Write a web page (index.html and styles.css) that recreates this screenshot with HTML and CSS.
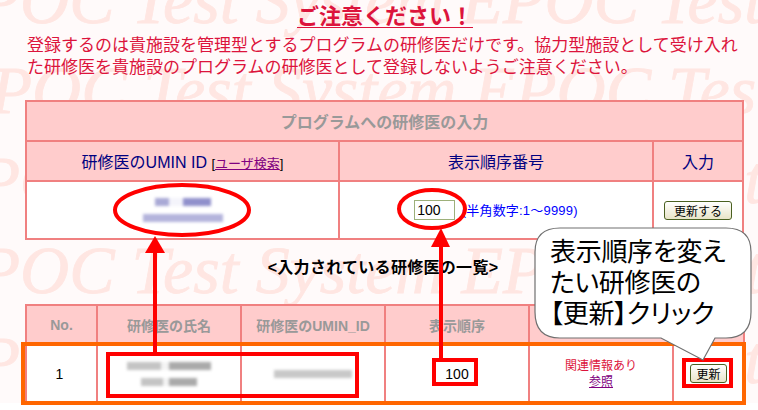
FILE: index.html
```html
<!DOCTYPE html>
<html lang="ja">
  <head>
    <meta charset="UTF-8" />
    <title>研修医の表示順序の変更</title>
    <link rel="stylesheet" href="styles.css">
  </head>

  <body>
    <div class="page">
      <div class="watermark">
        <div class="wm-row wm-a">EPOC Test System EPOC Test</div>
        <div class="wm-row wm-b">EPOC Test System EPOC Test</div>
        <div class="wm-row wm-a">EPOC Test System EPOC Test</div>
        <div class="wm-row wm-a">EPOC Test System EPOC Test</div>
        <div class="wm-row wm-a">EPOC Test System EPOC Test</div>
      </div>

      <h1 class="notice-title"><span>ご注意ください！</span></h1>
      <p class="notice">登録するのは貴施設を管理型とするプログラムの研修医だけです。協力型施設として受け入れた研修医を貴施設のプログラムの研修医として登録しないようご注意ください。</p>

      <table class="grid input-table">
        <colgroup>
          <col class="c-id" />
          <col class="c-order" />
          <col class="c-action" />
        </colgroup>
        <tr class="title-row">
          <th colspan="3">プログラムへの研修医の入力</th>
        </tr>
        <tr class="head-row">
          <td>研修医のUMIN ID <span class="small">[<a href="#">ユーザ検索</a>]</span></td>
          <td>表示順序番号</td>
          <td>入力</td>
        </tr>
        <tr class="input-row">
          <td>
            <div class="blur blur-blue">
              <i class="b-line1"></i>
              <i class="b-line2"></i>
            </div>
          </td>
          <td>
            <input class="order-input" type="text" value="100" />
            <span class="hint">(半角数字:1～9999)</span>
          </td>
          <td><button class="btn btn-wide">更新する</button></td>
        </tr>
      </table>

      <h2 class="list-title">&lt;入力されている研修医の一覧&gt;</h2>

      <table class="grid list-table">
        <colgroup>
          <col class="c-no" />
          <col class="c-name" />
          <col class="c-umin" />
          <col class="c-seq" />
          <col class="c-rel" />
          <col class="c-upd" />
        </colgroup>
        <tr class="list-head">
          <th>No.</th>
          <th>研修医の氏名</th>
          <th>研修医のUMIN_ID</th>
          <th>表示順序</th>
          <th>関連情報</th>
          <th>更新</th>
        </tr>
        <tr class="list-row">
          <td class="no-cell">1</td>
          <td>
            <div class="blur blur-gray">
              <i class="n-line1"></i>
              <i class="n-line2"></i>
            </div>
          </td>
          <td>
            <div class="blur blur-gray"><i class="u-line"></i></div>
          </td>
          <td>100</td>
          <td class="related">関連情報あり<br /><a href="#">参照</a></td>
          <td><button class="btn">更新</button></td>
        </tr>
      </table>
    </div>

    <!-- annotations drawn on top of the screenshot -->
    <svg class="marks" width="758" height="410" viewBox="0 0 758 410">
      <rect x="23" y="344" width="721" height="59" fill="none" stroke="#ff6600" stroke-width="4" />
      <g fill="none" stroke="#ff0000" stroke-width="4">
        <ellipse cx="182" cy="210" rx="67" ry="25" />
        <ellipse cx="432" cy="209" rx="33" ry="19" />
        <rect x="108" y="354" width="249" height="42" />
        <rect x="434" y="360" width="42" height="24" />
        <rect x="684" y="360" width="47" height="26" />
      </g>
      <g fill="#ff0000">
        <rect x="153" y="250" width="4" height="103" />
        <path d="M155 236 L165 253 L145 253 Z" />
        <rect x="439" y="245" width="4" height="114" />
        <path d="M441 228 L450 247 L431 247 Z" />
      </g>
      <path d="M560 228 H726 C744 228 751 238 751 252 V312 C751 328 744 338 726 338 H715 L703 360 L661 338 H560 C542 338 535 328 535 312 V252 C535 238 542 228 560 228 Z" fill="#ffffff" stroke="#707070" stroke-width="1.2" />
    </svg>
    <div class="callout">表示順序を変え<br />たい研修医の<br />【更新】クリック</div>
  </body>
</html>
```

FILE: styles.css
```css
* {
  padding: 0px;
  margin: 0px;
  box-sizing: border-box;
}

html,
body {
  width: 100%;
  height: 100%;
  background: #fff;
  overflow: hidden;
  font-family: "Liberation Sans", "Noto Sans CJK JP", sans-serif;
}

.page {
  position: relative;
  height: 403px;
  background: #fffafa;
  overflow: hidden;
  padding-top: 4px;
}

.watermark {
  position: absolute;
  top: -45px;
  left: 0;
  width: 900px;
  font-family: "Liberation Serif", serif;
  font-style: italic;
  font-size: 68px;
  line-height: 90px;
  color: #ffe6e2;
  -webkit-text-stroke: 0.8px #ffe6e2;
  white-space: nowrap;
}

.wm-a {
  margin-left: -63px;
}

.wm-b {
  margin-left: -51px;
}

.notice-title,
.notice,
.grid,
.list-title {
  position: relative;
}

.notice-title {
  text-align: center;
  font-size: 22px;
  line-height: 26px;
  color: #dc143c;
  padding-left: 12px;
}

.notice-title span {
  text-decoration: underline;
  text-decoration-thickness: 1px;
  text-underline-offset: 3px;
}

.notice {
  margin: 5px 0 0 27px;
  width: 722px;
  font-size: 17px;
  line-height: 22px;
  color: #dc143c;
}

.grid {
  table-layout: fixed;
  border-collapse: collapse;
  background: #fff;
  margin-left: 25px;
  text-align: center;
}

.grid th,
.grid td {
  border: 2px solid #f08080;
}

.input-table {
  width: 719px;
  margin-top: 21px;
}

.c-id {
  width: 313px;
}

.c-order {
  width: 314px;
}

.title-row th {
  height: 40px;
  background: #ffcccc;
  color: #999;
  font-size: 16px;
}

.head-row td {
  height: 40px;
  background: #ffcccc;
  color: #000080;
  font-size: 16px;
}

.small {
  font-size: 13px;
  color: #000;
}

a {
  color: #800080;
}

.input-row td {
  height: 58px;
}

.order-input {
  width: 41px;
  height: 20px;
  padding-left: 2px;
  border: 1px solid #9db07a;
  font: 14px "Liberation Sans", sans-serif;
  vertical-align: middle;
}

.hint {
  font-size: 13px;
  letter-spacing: 0.2px;
  color: #0000ff;
  margin-left: 2px;
}

.btn {
  width: 37px;
  height: 19px;
  border: 1px solid #4a6020;
  border-radius: 3px;
  background: linear-gradient(#ffffff, #e8e4c8);
  font: 12px "Liberation Sans", "Noto Sans CJK JP", sans-serif;
  color: #000;
}

.btn-wide {
  width: 68px;
}

.list-title {
  margin-top: 17px;
  text-align: center;
  font-size: 16px;
  line-height: 22px;
  letter-spacing: 0.3px;
  color: #000;
  padding-left: 8px;
}

.list-table {
  width: 720px;
  margin-top: 25px;
}

.c-no {
  width: 71px;
}

.c-name,
.c-umin,
.c-seq,
.c-rel {
  width: 144px;
}

.list-head th {
  height: 39px;
  background: #ffcccc;
  color: #999;
  font-size: 14px;
}

.list-row td {
  height: 59px;
  font-size: 14px;
}

.no-cell {
  padding-right: 4px;
}

.related {
  color: #dc143c;
  font-size: 12px !important;
  line-height: 16px;
}

.blur {
  display: flex;
  flex-direction: column;
  align-items: center;
  gap: 8px;
  filter: blur(1.5px);
}

.blur i {
  display: block;
  height: 8px;
}

.blur-blue i {
  background: linear-gradient(90deg, #a9a9d6 25%, #f4f4fb 25% 50%, #9090cc 50%);
}

.blur-blue .b-line2 {
  background: #b4b4dc;
}

.blur-gray i {
  background: linear-gradient(90deg, #c4c4c4 40%, #f4f4f4 40% 50%, #aaaaaa 50%);
}

.blur-gray .u-line {
  background: #c8c8c8;
}

.b-line1 {
  width: 56px;
}

.b-line2 {
  width: 80px;
}

.n-line1 {
  width: 84px;
}

.n-line2 {
  width: 56px;
}

.u-line {
  width: 78px;
}

.marks {
  position: absolute;
  top: 0;
  left: 0;
}

.callout {
  position: absolute;
  top: 237px;
  left: 550px;
  font-size: 26px;
  line-height: 31px;
  font-feature-settings: "palt";
  letter-spacing: -0.3px;
  color: #000;
  white-space: nowrap;
}
```
